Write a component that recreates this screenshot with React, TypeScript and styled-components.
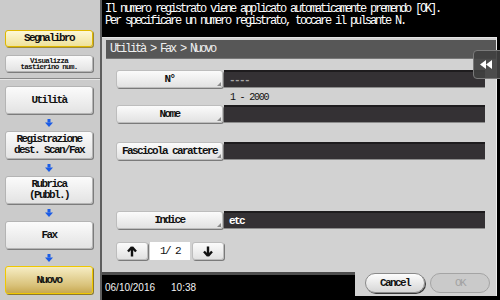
import styled, { createGlobalStyle, css } from 'styled-components';

const GlobalStyle = createGlobalStyle`
  html, body {
    margin: 0;
    padding: 0;
    background: #000;
  }
  * {
    box-sizing: border-box;
  }
`;

const pixelFont = css`
  font-family: "Liberation Mono", "DejaVu Sans Mono", monospace;
  font-size: 11px;
  letter-spacing: -1.6px;
  font-weight: bold;
`;

const Screen = styled.div`
  position: relative;
  width: 500px;
  height: 300px;
  display: flex;
  background: #000;
  overflow: hidden;
`;

const Sidebar = styled.div`
  width: 102px;
  height: 300px;
  background: #cbcbcb;
  border-right: 2px solid #5e5e5e;
  display: flex;
  flex-direction: column;
  padding-top: 30px;
`;

const SideDivider = styled.div`
  height: 2px;
  margin: 6px 0 6px 0;
  border-top: 1px solid #8a8a8a;
  border-bottom: 1px solid #e6e6e6;
`;

const NavButton = styled.div<{ $tone?: 'plain' | 'yellow' | 'gold'; $tall?: boolean; $gap?: number }>`
  ${pixelFont}
  margin: ${p => p.$gap ?? 0}px 7px 0 5px;
  height: ${p => (p.$tall ? 28 : 17)}px;
  flex-shrink: 0;
  display: flex;
  align-items: center;
  justify-content: center;
  text-align: center;
  line-height: 11px;
  color: #111;
  border-radius: 3px;
  ${p =>
    p.$tone === 'yellow'
      ? css`
          background: linear-gradient(#fdf8d8, #efe29a);
          border: 1px solid #e0b800;
          box-shadow: 1px 1px 0 #9c8a3a;
        `
      : p.$tone === 'gold'
        ? css`
            background: linear-gradient(#f6edc4, #d9c27a 70%, #c7a851);
            border: 1px solid #f0c800;
            box-shadow: 1px 1px 0 #8c7a30;
          `
        : css`
            background: linear-gradient(#fbfbfb, #e3e3e3);
            border: 1px solid #b4b4b4;
            box-shadow: 1px 1px 0 #7c7c7c;
          `}
`;

const TinyLabel = styled.span`
  font-size: 7.5px;
  letter-spacing: -0.7px;
  line-height: 6.5px;
  padding-top: 1px;
`;

const FlowArrow = styled.div`
  height: 17px;
  flex-shrink: 0;
  display: flex;
  align-items: center;
  justify-content: center;
  padding-right: 2px;
`;

const Main = styled.div`
  flex: 1;
  display: flex;
  flex-direction: column;
`;

const Message = styled.div`
  ${pixelFont}
  font-weight: normal;
  font-size: 12px;
  letter-spacing: -2.2px;
  height: 37px;
  padding: 3px 0 0 3px;
  color: #fff;
  line-height: 12px;
  white-space: pre;
`;

const Panel = styled.div`
  flex: 1;
  margin-right: 3px;
  background: #d2d2d2;
  border-right: 1px solid #ececec;
  border-top: 1px solid #e4e4e4;
  padding: 2px 0 0 4px;
  display: flex;
  flex-direction: column;
`;

const Breadcrumb = styled.div`
  ${pixelFont}
  font-weight: normal;
  font-size: 12px;
  letter-spacing: -2.2px;
  height: 19px;
  background: #575757;
  border-bottom: 1px solid #777;
  color: #efefef;
  display: flex;
  align-items: center;
  padding-left: 4px;
`;

const Rows = styled.div`
  display: flex;
  flex-direction: column;
  padding: 0 11px 0 10px;
`;

const Row = styled.div<{ $top: number }>`
  display: flex;
  height: 18px;
  margin-top: ${p => p.$top}px;
`;

const FieldLabel = styled.div`
  ${pixelFont}
  position: relative;
  width: 107px;
  height: 18px;
  display: flex;
  align-items: center;
  justify-content: center;
  color: #111;
  background: linear-gradient(#fbfbfb, #e2e2e2);
  border: 1px solid #bdbdbd;
  border-radius: 3px;
  box-shadow: 1px 1px 0 #7a7a7a;
  &::after {
    content: '';
    position: absolute;
    right: 1px;
    bottom: 1px;
    border-style: solid;
    border-width: 0 0 4px 4px;
    border-color: transparent transparent #8a8a8a transparent;
  }
`;

const FieldValue = styled.div<{ $muted?: boolean }>`
  ${pixelFont}
  flex: 1;
  height: 18px;
  background: #343134;
  border-top: 2px solid #1e1c1e;
  border-bottom: 1px solid #8c8c8c;
  color: ${p => (p.$muted ? '#a8a8a8' : '#ffffff')};
  display: flex;
  align-items: center;
  padding-left: 5px;
  margin-left: 1px;
`;

const Hint = styled.div`
  ${pixelFont}
  font-weight: normal;
  height: 17px;
  padding: 5px 0 0 114px;
  font-size: 10px;
  letter-spacing: -1.2px;
  line-height: 10px;
  color: #111;
`;

const Pager = styled.div`
  display: flex;
  align-items: center;
  gap: 2px;
  height: 18px;
  margin-top: 13px;
`;

const PageButton = styled.div`
  width: 32px;
  height: 18px;
  display: flex;
  align-items: center;
  justify-content: center;
  background: linear-gradient(#fbfbfb, #e2e2e2);
  border: 1px solid #bdbdbd;
  border-radius: 3px;
  box-shadow: 1px 1px 0 #7a7a7a;
`;

const PageCount = styled.div`
  ${pixelFont}
  font-weight: normal;
  width: 40px;
  height: 18px;
  background: #fff;
  display: flex;
  align-items: center;
  justify-content: center;
  color: #111;
  white-space: pre;
`;

const Footer = styled.div`
  height: 28px;
  display: flex;
  background: #000;
`;

const DateBar = styled.div`
  flex: 1;
  border-top: 3px solid #4e4e4e;
  color: #f2f2f2;
  font-family: "Liberation Sans", Arial, sans-serif;
  font-size: 10px;
  display: flex;
  align-items: center;
  gap: 16px;
  padding: 0 0 0 3px;
`;

const ActionArea = styled.div`
  width: 142px;
  height: 24px;
  margin-right: 3px;
  background: #d2d2d2;
  border-right: 1px solid #ececec;
  display: flex;
  gap: 5px;
  padding: 1px 0 0 10px;
`;

const PillButton = styled.div<{ $disabled?: boolean }>`
  ${pixelFont}
  width: 60px;
  height: 20px;
  border-radius: 10px;
  display: flex;
  align-items: center;
  justify-content: center;
  ${p =>
    p.$disabled
      ? css`
          background: #cacaca;
          border: 1px solid #a4a4a4;
          color: #a2a2a2;
          font-weight: normal;
        `
      : css`
          background: linear-gradient(#fdfdfd, #d6d6d6);
          border: 1px solid #8a8a8a;
          box-shadow: 1px 1px 0 #3a3a3a;
          color: #111;
        `}
`;

const SideTab = styled.div`
  position: absolute;
  left: 473px;
  top: 50px;
  width: 30px;
  height: 29px;
  background: rgba(64, 64, 64, 0.92);
  border: 1px solid #7a7a7a;
  border-radius: 4px 0 0 4px;
  display: flex;
  align-items: center;
  justify-content: center;
  padding-right: 4px;
`;

const BlueArrow = () => (
  <svg width="8" height="8" viewBox="0 0 8 8">
    <rect x="2.5" y="0" width="3" height="3.5" fill="#1b5ce6" />
    <polygon points="0,3.5 8,3.5 4,8" fill="#1b5ce6" />
  </svg>
);

const PageArrow = ({ down }: { down?: boolean }) => (
  <svg width="10" height="11" viewBox="0 0 10 11" style={down ? { transform: 'rotate(180deg)' } : undefined}>
    <path d="M5 1 L1 5.5 M5 1 L9 5.5 M5 1 L5 10.5" stroke="#111" strokeWidth="2.4" fill="none" />
  </svg>
);

const RewindIcon = () => (
  <svg width="12" height="9" viewBox="0 0 12 9">
    <polygon points="0,4.5 6,0 6,9" fill="#fff" />
    <polygon points="6,4.5 12,0 12,9" fill="#fff" />
  </svg>
);

const App = () => {
  return (
    <>
      <GlobalStyle />
      <Screen>
        <Sidebar>
          <NavButton $tone="yellow">Segnalibro</NavButton>
          <NavButton $gap={8}>
            <TinyLabel>
              Visualizza
              <br />
              tastierino num.
            </TinyLabel>
          </NavButton>
          <SideDivider />
          <NavButton $tall>Utilità</NavButton>
          <FlowArrow><BlueArrow /></FlowArrow>
          <NavButton $tall>
            Registrazione
            <br />
            dest. Scan/Fax
          </NavButton>
          <FlowArrow><BlueArrow /></FlowArrow>
          <NavButton $tall>
            Rubrica
            <br />
            (Pubbl.)
          </NavButton>
          <FlowArrow><BlueArrow /></FlowArrow>
          <NavButton $tall>Fax</NavButton>
          <FlowArrow><BlueArrow /></FlowArrow>
          <NavButton $tall $tone="gold">Nuovo</NavButton>
        </Sidebar>
        <Main>
          <Message>
            {'Il numero registrato viene applicato automaticamente premendo [OK].\nPer specificare un numero registrato, toccare il pulsante N.'}
          </Message>
          <Panel>
            <Breadcrumb>Utilità &gt; Fax &gt; Nuovo</Breadcrumb>
            <Rows>
              <Row $top={11}>
                <FieldLabel>N°</FieldLabel>
                <FieldValue $muted>----</FieldValue>
              </Row>
              <Hint>1 - 2000</Hint>
              <Row $top={0}>
                <FieldLabel>Nome</FieldLabel>
                <FieldValue />
              </Row>
              <Row $top={19}>
                <FieldLabel>Fascicola carattere</FieldLabel>
                <FieldValue />
              </Row>
              <Row $top={51}>
                <FieldLabel>Indice</FieldLabel>
                <FieldValue>etc</FieldValue>
              </Row>
              <Pager>
                <PageButton><PageArrow /></PageButton>
                <PageCount>{'1/ 2'}</PageCount>
                <PageButton><PageArrow down /></PageButton>
              </Pager>
            </Rows>
          </Panel>
          <Footer>
            <DateBar>
              <span>06/10/2016</span>
              <span>10:38</span>
            </DateBar>
            <ActionArea>
              <PillButton>Cancel</PillButton>
              <PillButton $disabled>OK</PillButton>
            </ActionArea>
          </Footer>
        </Main>
        <SideTab><RewindIcon /></SideTab>
      </Screen>
    </>
  );
};

export default App;
